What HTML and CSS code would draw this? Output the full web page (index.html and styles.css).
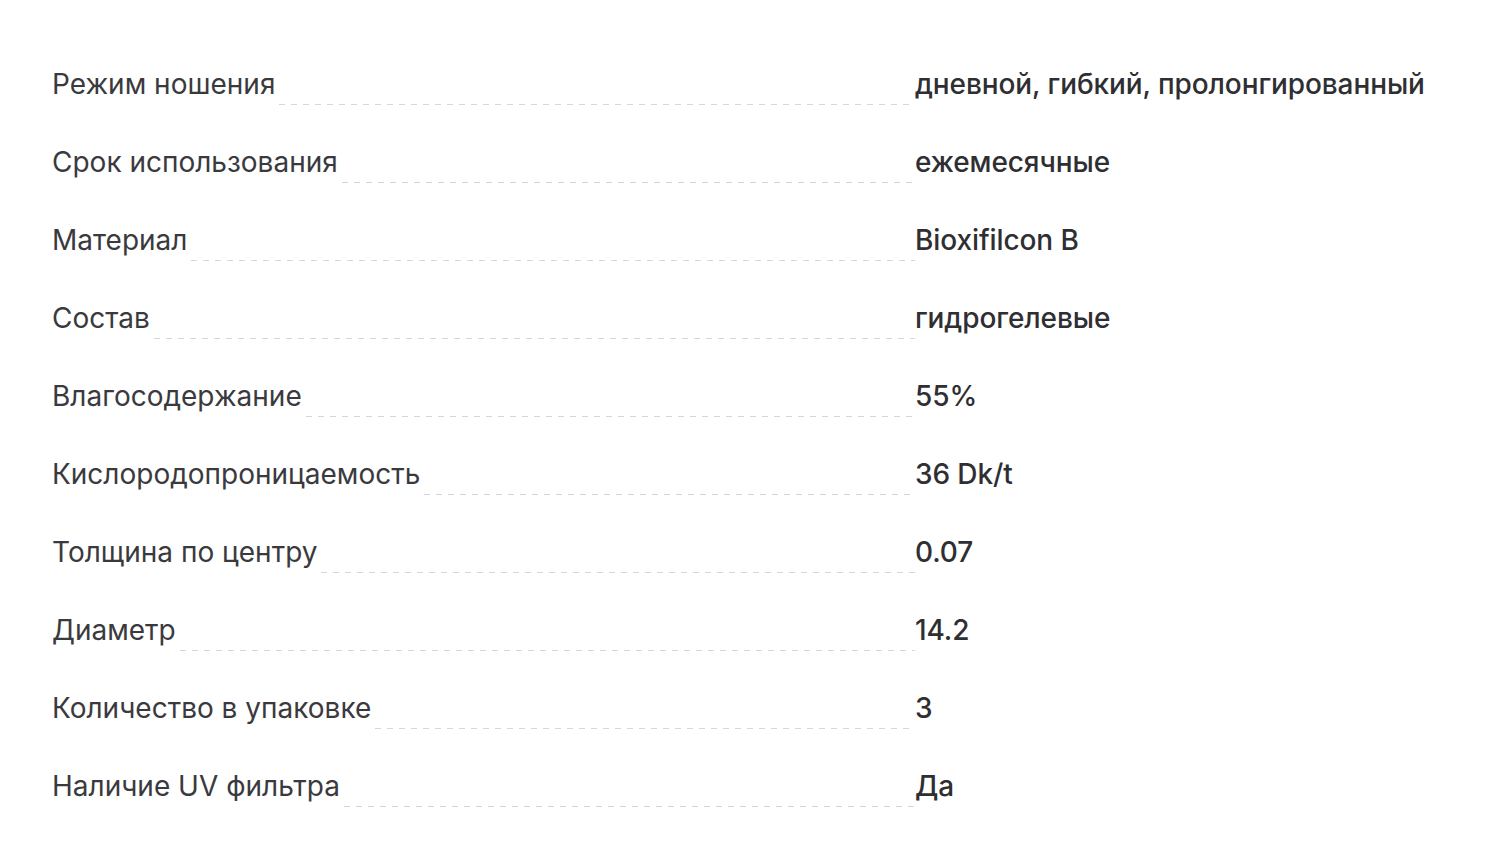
FILE: index.html
```html
<!DOCTYPE html>
<html lang="ru">
<head>
<meta charset="utf-8">
<link rel="stylesheet" href="styles.css">
</head>
<body>
<div class="specs">
  <div class="row"><div class="name"><span class="label">Режим ношения</span><span class="fill"></span></div><div class="value">дневной, гибкий, пролонгированный</div></div>
  <div class="row"><div class="name"><span class="label">Срок использования</span><span class="fill"></span></div><div class="value">ежемесячные</div></div>
  <div class="row"><div class="name"><span class="label">Материал</span><span class="fill"></span></div><div class="value">Bioxifilcon B</div></div>
  <div class="row"><div class="name"><span class="label">Состав</span><span class="fill"></span></div><div class="value">гидрогелевые</div></div>
  <div class="row"><div class="name"><span class="label">Влагосодержание</span><span class="fill"></span></div><div class="value">55%</div></div>
  <div class="row"><div class="name"><span class="label">Кислородопроницаемость</span><span class="fill"></span></div><div class="value">36 Dk/t</div></div>
  <div class="row"><div class="name"><span class="label">Толщина по центру</span><span class="fill"></span></div><div class="value">0.07</div></div>
  <div class="row"><div class="name"><span class="label">Диаметр</span><span class="fill"></span></div><div class="value">14.2</div></div>
  <div class="row"><div class="name"><span class="label">Количество в упаковке</span><span class="fill"></span></div><div class="value">3</div></div>
  <div class="row"><div class="name"><span class="label">Наличие UV фильтра</span><span class="fill"></span></div><div class="value">Да</div></div>
</div>
</body>
</html>
```

FILE: styles.css
```css
html, body {
  margin: 0;
  padding: 0;
  background: #ffffff;
}

body {
  font-family: Inter, "Noto Sans", "Liberation Sans", sans-serif;
  font-size: 28px;
  line-height: 32px;
  color: #3a3a3e;
}

.specs {
  padding: 45px 52px 0 52px;
}

.row {
  display: grid;
  grid-template-columns: 863px 1fr;
  padding: 23px 0;
}

.name {
  display: flex;
}

.label {
  white-space: nowrap;
}

.fill {
  flex: 1;
  margin: 0 0 -5px 4px;
  background-image: repeating-linear-gradient(to right, #d6d6de 0 6px, transparent 6px 12px);
  background-size: 100% 1px;
  background-repeat: no-repeat;
  background-position: left bottom;
}

.value {
  font-weight: 500;
  color: #2f2f33;
  white-space: nowrap;
  letter-spacing: -0.1px;
}
```
